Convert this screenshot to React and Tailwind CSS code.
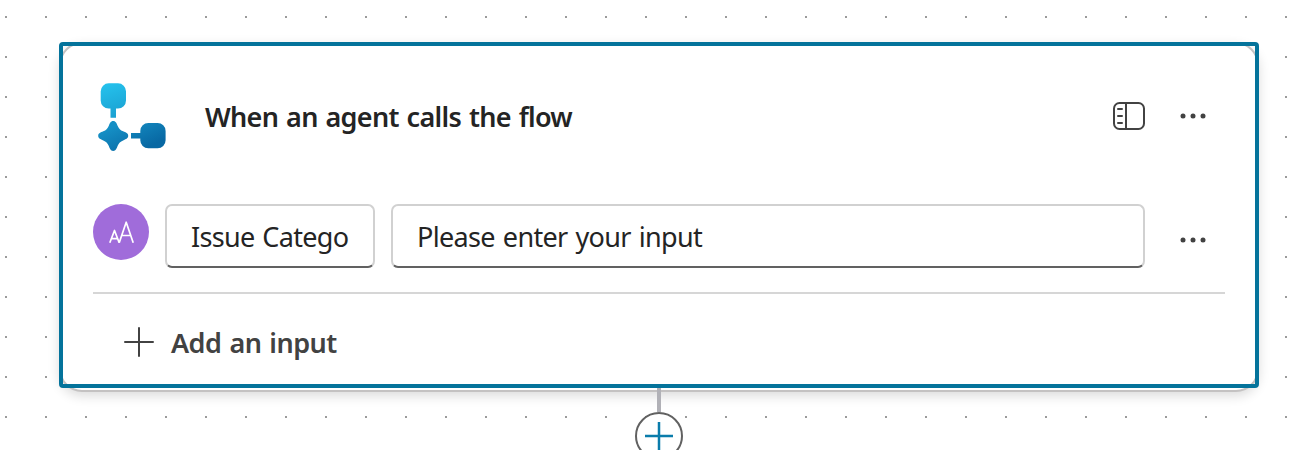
function Dots() {
  return (
    <svg className="absolute inset-0" width="1306" height="450" aria-hidden="true">
      <defs>
        <pattern id="dots" x="5" y="16" width="40" height="40" patternUnits="userSpaceOnUse">
          <rect width="2" height="2" fill="#9b9b9b" />
        </pattern>
      </defs>
      <rect width="1306" height="450" fill="url(#dots)" />
    </svg>
  );
}

function FlowLogo() {
  return (
    <svg width="68" height="68" viewBox="98 83 68 68" className="block">
      <defs>
        <linearGradient id="top" x1="106" y1="83" x2="118" y2="118" gradientUnits="userSpaceOnUse">
          <stop stopColor="#25c2ed" />
          <stop offset="1" stopColor="#1a9fd0" />
        </linearGradient>
        <linearGradient id="low" x1="125" y1="121" x2="139" y2="151" gradientUnits="userSpaceOnUse">
          <stop stopColor="#158fc5" />
          <stop offset="1" stopColor="#0868a3" />
        </linearGradient>
      </defs>
      <path fill="url(#top)" d="M108.7 83.300h9.300a8 8 0 0 1 8 8v9.300a8 8 0 0 1-8 8h-2v9.200h-5.500v-9.200h-1.800a8 8 0 0 1-8-8V91.300a8 8 0 0 1 8-8Z" />
      <path fill="url(#low)" d="M113.200 121C115.900 121 116.600 123.400 117.700 125.900C118.900 128.700 120.300 130.100 123.100 131.300C125.800 132.400 128.200 133.100 128.200 135.800C128.200 138.500 125.800 139.300 123.100 140.400C120.300 141.600 118.900 143 117.700 145.800C116.600 148.500 115.900 151 113.200 151C110.500 151 109.800 148.500 108.700 145.800C107.500 143 106.100 141.600 103.300 140.400C100.600 139.300 98.200 138.500 98.200 135.800C98.200 133.100 100.600 132.400 103.300 131.300C106.100 130.100 107.500 128.700 108.700 125.900C109.800 123.400 110.500 121 113.200 121Z" />
      <path fill="url(#low)" d="M131 133h9.300v-2a8 8 0 0 1 8-8h9.300a8 8 0 0 1 8 8v9.300a8 8 0 0 1-8 8h-9.300a8 8 0 0 1-8-8V138.500H131Z" />
    </svg>
  );
}

function PanelIcon() {
  return (
    <svg width="32" height="28" viewBox="0 0 32 28" fill="none" stroke="#424242" strokeWidth="2">
      <rect x="1" y="1" width="30" height="26" rx="5.500" />
      <path d="M13 1v26" />
      <path d="M5 7h4M5 14h4M5 21h4" strokeLinecap="round" />
    </svg>
  );
}

function MoreIcon() {
  return (
    <svg width="26" height="6" viewBox="0 0 26 6" fill="#424242">
      <circle cx="3" cy="3" r="2.5" />
      <circle cx="13" cy="3" r="2.500" />
      <circle cx="23" cy="3" r="2.500" />
    </svg>
  );
}

function TextTypeIcon() {
  return (
    <span className="flex h-14 w-14 shrink-0 items-center justify-center rounded-full bg-[#a06cda]">
      <svg width="56" height="56" viewBox="0 0 56 56" fill="none" stroke="#fff" strokeWidth="1.700" strokeLinejoin="round">
        <path d="M16.800 38.800L21.500 26.500L26.200 38.800M18.500 34.600h6" />
        <path d="M26.200 38.800L33.200 18.200L40.200 38.800M28.500 31.500h9.400" />
      </svg>
    </span>
  );
}

function Field({ className, children }) {
  return (
    <div className={`flex h-16 items-center overflow-hidden whitespace-nowrap rounded-[7px] border-2 border-[#d1d1d1] border-b-[#616161] bg-white pl-6 pt-[3px] ${className}`}>
      {children}
    </div>
  );
}

export default function App() {
  return (
    <div className="relative h-[450px] w-[1306px] overflow-hidden bg-white font-['Noto_Sans','Open_Sans',sans-serif] text-[27px] text-[#242424]">
      <Dots />
      <div className="relative flex flex-col items-center pl-[59px] pr-[47px] pt-[42px]">
        <section className="relative h-[346px] w-[1200px] px-[34px] pt-[41px]">
          <div className="absolute inset-x-0 -bottom-[4px] top-0 rounded-[23px] border-2 border-[#c4c2c2] bg-white shadow-[0_4px_12px_rgba(0,0,0,0.14)]" />
          <div className="absolute inset-0 rounded-[4px] border-4 border-[#04739b]" />
          <div className="relative">
            <header className="flex h-[68px] items-center pl-[5px] pr-[19px]">
              <FlowLogo />
              <h1 className="ml-[39px] flex-1 whitespace-nowrap font-semibold leading-9">
                <span className="inline-block tracking-[-0.690px] [word-spacing:1.500px]">When an agent calls the flow</span>
              </h1>
              <div className="-mt-0.5 flex items-center gap-[35px]">
                <PanelIcon />
                <MoreIcon />
              </div>
            </header>
            <div className="mt-[53px] flex h-[90px] items-start border-b-2 border-[#d6d6d6]">
              <TextTypeIcon />
              <Field className="ml-4 w-[210px]"><span className="tracking-[-0.680px] [word-spacing:1.500px]">Issue Catego</span></Field>
              <Field className="ml-4 w-[754px]"><span className="tracking-[-0.650px] [word-spacing:1.500px]">Please enter your input</span></Field>
              <div className="ml-[35px] flex h-[72px] items-center"><MoreIcon /></div>
            </div>
            <button className="ml-[31px] mt-[29px] flex h-10 items-center font-semibold text-[#424242]">
              <svg width="30" height="30" viewBox="0 0 30 30" stroke="#424242" strokeWidth="2" strokeLinecap="round" className="-mt-0.5">
                <path d="M15 1v28M1 15h28" />
              </svg>
              <span className="ml-[17px] tracking-[-0.520px] [word-spacing:1.500px]">Add an input</span>
            </button>
          </div>
        </section>
        <div className="relative h-6 w-1 bg-[#b1b1b7]" />
        <div className="relative flex h-12 w-12 shrink-0 items-center justify-center rounded-full border-2 border-[#616161] bg-white">
          <svg width="28" height="28" viewBox="0 0 28 28" stroke="#0a7cab" strokeWidth="2.500">
            <path d="M14 0v28M0 14h28" />
          </svg>
        </div>
      </div>
    </div>
  );
}
